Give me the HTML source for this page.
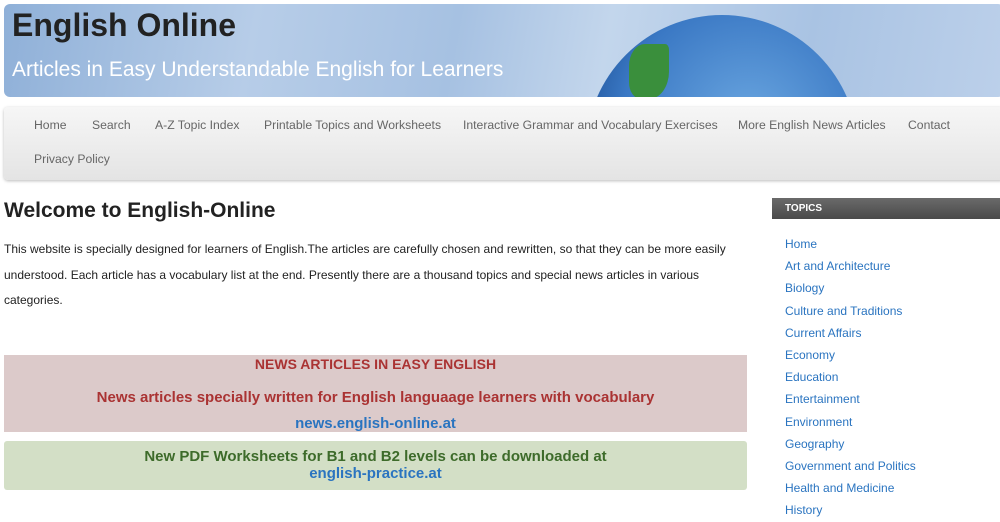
<!DOCTYPE html>
<html><head><style>
body{margin:0;width:1000px;height:517px;overflow:hidden;background:#fff;font-family:"Liberation Sans",sans-serif;position:relative}
.hdr{position:absolute;left:4px;top:4px;width:1000px;height:93px;border-radius:6px;overflow:hidden;background:linear-gradient(100deg,#8fb0d8 0%,#b7cde8 25%,#a6c1e2 45%,#c3d6ec 60%,#a9c3e3 80%,#bcd0ea 100%)}
.globe{position:absolute;left:582px;top:11px;width:272px;height:272px;border-radius:50%;background:radial-gradient(circle at 60% 40%,#6aa6e0,#3a78c4 55%,#1d4f94 80%,#0d2c5a)}
.h1{position:absolute;left:8px;top:3px;font-size:32px;font-weight:bold;color:#222}
.h2{position:absolute;left:8px;top:54px;font-size:21px;color:#fff}
.nav{position:absolute;left:4px;top:107px;width:1000px;height:73px;border-radius:4px;background:linear-gradient(#f6f6f6,#e4e4e4);box-shadow:0 1px 3px #bbb}
.nav span{position:absolute;font-size:12.2px;color:#666}
h1.t{position:absolute;left:4px;top:199px;margin:0;font-size:21px;color:#222}
p{position:absolute;left:4px;top:237px;width:740px;margin:0;font-size:12px;line-height:25.5px;color:#222}
.pink{position:absolute;left:4px;top:355px;width:743px;height:77px;background:#dccaca;text-align:center;font-weight:bold}
.green{position:absolute;left:4px;top:441px;width:743px;height:49px;background:#d3dfc6;border-radius:3px;text-align:center;font-weight:bold}
.side{position:absolute;left:772px;top:198px;width:228px;height:21px;background:linear-gradient(#6a6a6a,#4a4a4a);color:#fff;font-size:10px;font-weight:bold;line-height:22px;padding-left:13px;box-sizing:border-box}
.links{position:absolute;left:785px;top:233px;font-size:12px;color:#2a74c0;line-height:22.2px}
</style></head><body>
<div class="hdr"><div class="globe"></div>
<div style="position:absolute;left:625px;top:40px;width:40px;height:55px;background:#3a8f3c;border-radius:40% 10% 50% 30%"></div>
<div class="h1">English Online</div><div class="h2">Articles in Easy Understandable English for Learners</div></div>
<div class="nav">
<span style="left:30px;top:11px">Home</span><span style="left:88px;top:11px">Search</span><span style="left:151px;top:11px">A-Z Topic Index</span><span style="left:260px;top:11px">Printable Topics and Worksheets</span><span style="left:459px;top:11px">Interactive Grammar and Vocabulary Exercises</span><span style="left:734px;top:11px">More English News Articles</span><span style="left:904px;top:11px">Contact</span><span style="left:30px;top:45px">Privacy Policy</span></div>
<h1 class="t">Welcome to English-Online</h1>
<p>This website is specially designed for learners of English.The articles are carefully chosen and rewritten, so that they can be more easily understood. Each article has a vocabulary list at the end. Presently there are a thousand topics and special news articles in various categories.</p>
<div class="pink"><div style="color:#a33;font-size:14px;margin-top:1px">NEWS ARTICLES IN EASY ENGLISH</div><div style="color:#a33;font-size:15px;margin-top:17px">News articles specially written for English languaage learners with vocabulary</div><div style="color:#2a74c0;font-size:15px;margin-top:9px">news.english-online.at</div></div>
<div class="green"><div style="color:#3d6b2a;font-size:15px;margin-top:7px">New PDF Worksheets for B1 and B2 levels can be downloaded at</div><div style="color:#2a74c0;font-size:15px">english-practice.at</div></div>
<div class="side">TOPICS</div>
<div class="links">Home<br>Art and Architecture<br>Biology<br>Culture and Traditions<br>Current Affairs<br>Economy<br>Education<br>Entertainment<br>Environment<br>Geography<br>Government and Politics<br>Health and Medicine<br>History</div>
</body></html>
